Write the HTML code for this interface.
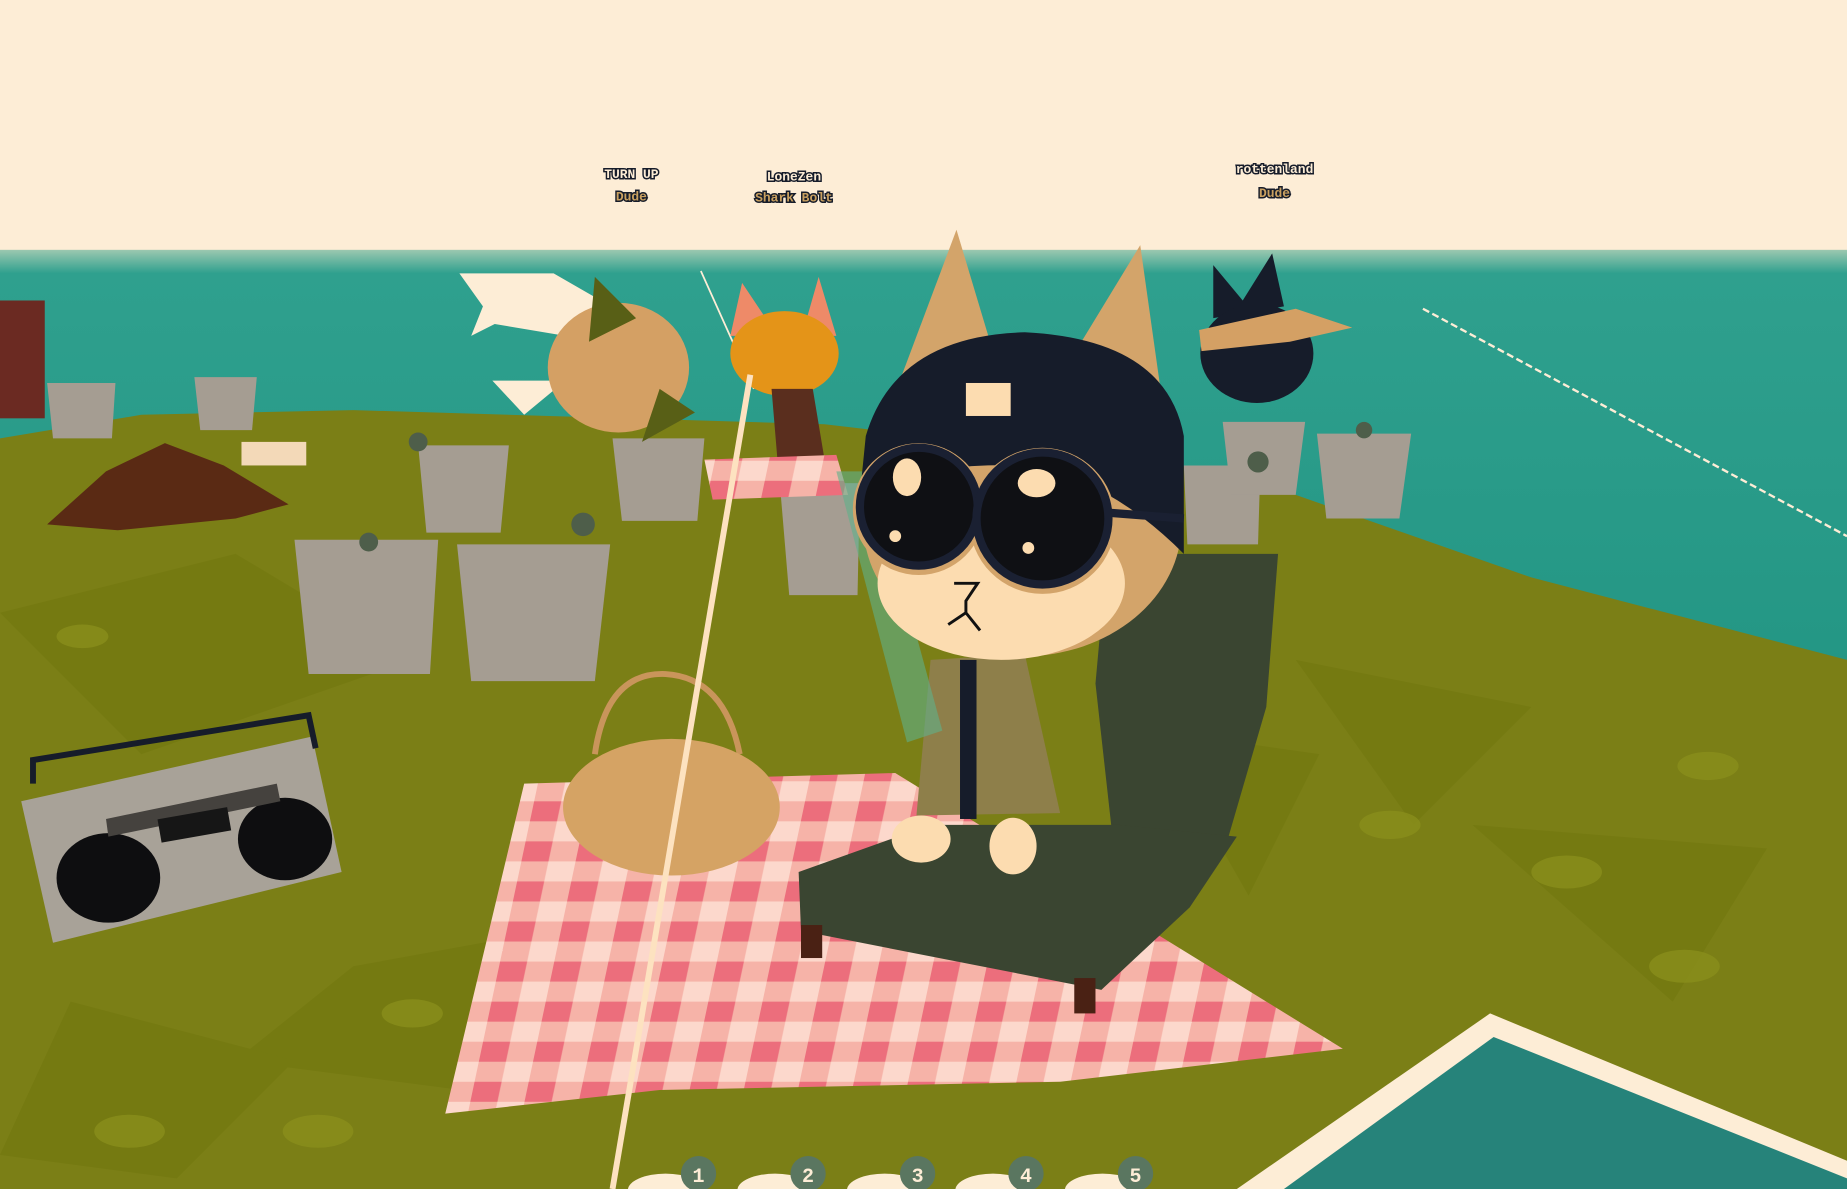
<!DOCTYPE html>
<html><head><meta charset="utf-8"><style>
html,body{margin:0;padding:0;background:#fdedd6;overflow:hidden}
svg{display:block}
text{font-family:"Liberation Mono",monospace;font-weight:bold}
</style></head><body>
<svg width="1847" height="1189" viewBox="0 0 1568 1009" preserveAspectRatio="none" xmlns="http://www.w3.org/2000/svg">
<defs>
<pattern id="chk" width="46" height="34" patternUnits="userSpaceOnUse" patternTransform="skewX(-12)">
<rect width="46" height="34" fill="#f6b3a8"/>
<rect width="23" height="17" fill="#ec6e7c"/>
<rect x="23" y="17" width="23" height="17" fill="#fcd8cc"/>
</pattern>
<linearGradient id="sea" x1="0" y1="0" x2="0" y2="1"><stop offset="0" stop-color="#9cc8b0"/><stop offset="0.05" stop-color="#2fa08e"/><stop offset="1" stop-color="#229583"/></linearGradient>
</defs>
<rect width="1568" height="1009" fill="#fdedd6"/>
<rect y="212" width="1568" height="400" fill="url(#sea)"/>
<polygon points="0,372 120,352 300,348 700,360 1000,395 1100,420 1300,490 1568,560 1568,1009 0,1009" fill="#7b7f16"/>
<g fill="#72770f" opacity="0.6">
<polygon points="0,520 200,470 350,560 120,640"/><polygon points="300,820 520,780 430,930 200,900"/>
<polygon points="1100,560 1300,600 1200,700"/><polygon points="1250,700 1500,720 1420,850"/>
<polygon points="60,850 250,900 150,1000 0,980"/><polygon points="980,620 1120,640 1060,760"/>
</g>
<g fill="#8a8f1c" opacity="0.8">
<ellipse cx="110" cy="960" rx="30" ry="14"/><ellipse cx="270" cy="960" rx="30" ry="14"/><ellipse cx="1430" cy="820" rx="30" ry="14"/><ellipse cx="1330" cy="740" rx="30" ry="14"/><ellipse cx="1180" cy="700" rx="26" ry="12"/><ellipse cx="1450" cy="650" rx="26" ry="12"/><ellipse cx="350" cy="860" rx="26" ry="12"/><ellipse cx="70" cy="540" rx="22" ry="10"/>
</g>
<polygon points="1050,1009 1265,860 1568,985 1568,1009" fill="#fdedd6"/>
<polygon points="1090,1009 1268,880 1568,1000 1568,1009" fill="#26837a"/>
<line x1="1208" y1="262" x2="1568" y2="455" stroke="#fdedd6" stroke-width="2" stroke-dasharray="6 3"/>
<line x1="595" y1="230" x2="640" y2="330" stroke="#fdedd6" stroke-width="1.5"/>
<polygon points="40,445 90,400 140,376 190,395 245,428 200,440 100,450" fill="#5a2a14"/>
<rect x="0" y="255" width="38" height="100" fill="#6b2a22"/>
<g fill="#a59d92">
<polygon points="40,325 98,325 95,372 45,372"/><polygon points="165,320 218,320 214,365 170,365"/>
<polygon points="355,378 432,378 425,452 362,452"/><polygon points="520,372 598,372 592,442 528,442"/>
<polygon points="250,458 372,458 365,572 262,572"/><polygon points="388,462 518,462 505,578 400,578"/>
<polygon points="662,410 730,410 728,505 670,505"/><polygon points="1005,395 1070,395 1068,462 1008,462"/>
<polygon points="1038,358 1108,358 1100,420 1045,420"/><polygon points="1118,368 1198,368 1188,440 1126,440"/>
</g>
<g fill="#4e5e4a"><circle cx="313" cy="460" r="8"/><circle cx="495" cy="445" r="10"/><circle cx="355" cy="375" r="8"/><circle cx="1068" cy="392" r="9"/><circle cx="1158" cy="365" r="7"/></g>
<rect x="205" y="375" width="55" height="20" fill="#f3d9b8"/>
<polygon points="390,232 470,232 510,255 480,285 420,275 400,285 410,260" fill="#fdedd6"/>
<polygon points="418,323 480,323 445,352" fill="#fdedd6"/>
<ellipse cx="525" cy="312" rx="60" ry="55" fill="#d4a064"/>
<polygon points="505,235 540,270 500,290" fill="#585f16"/><polygon points="560,330 590,350 545,375" fill="#585f16"/>
<polygon points="630,240 650,270 685,270 695,235 710,285 620,285" fill="#ee8a68"/>
<ellipse cx="666" cy="300" rx="46" ry="36" fill="#e49418"/>
<polygon points="655,330 690,330 700,390 660,390" fill="#5a2e1e"/>
<polygon points="1030,225 1055,255 1080,215 1090,260 1030,270" fill="#161c2a"/>
<ellipse cx="1067" cy="300" rx="48" ry="42" fill="#161c2a"/>
<polygon points="1018,280 1100,262 1148,278 1095,290 1020,298" fill="#d4a064"/>
<polygon points="598,390 710,386 720,420 605,424" fill="url(#chk)"/>
<polygon points="378,945 445,665 760,656 1140,890 900,918 560,925" fill="url(#chk)"/>
<path d="M505,640 Q515,570 565,572 Q615,575 628,640" fill="none" stroke="#c9955b" stroke-width="5"/>
<ellipse cx="570" cy="685" rx="92" ry="58" fill="#d5a364"/>
<polygon points="18,680 265,625 290,740 45,800" fill="#a8a298"/>
<path d="M28,665 L28,645 262,607 268,635" fill="none" stroke="#161c2a" stroke-width="5"/>
<ellipse cx="92" cy="745" rx="44" ry="38" fill="#0e0e10"/>
<ellipse cx="242" cy="712" rx="40" ry="35" fill="#0e0e10"/>
<polygon points="90,695 235,665 238,680 92,710" fill="#45423e"/>
<rect x="135" y="690" width="60" height="20" fill="#161616" transform="rotate(-10 165 700)"/>
<polygon points="940,470 1085,470 1075,600 1040,720 950,760 930,580" fill="#3a4531"/>
<polygon points="678,740 790,700 950,700 1050,710 1010,770 935,840 680,790" fill="#3a4531"/>
<rect x="680" y="785" width="18" height="28" fill="#4a2114"/><rect x="912" y="830" width="18" height="30" fill="#4a2114"/>
<polygon points="790,560 870,555 900,690 778,692" fill="#8e7f4a"/>
<rect x="815" y="560" width="14" height="135" fill="#161c2a"/>
<ellipse cx="782" cy="712" rx="25" ry="20" fill="#fcdcb0"/><ellipse cx="860" cy="718" rx="20" ry="24" fill="#fcdcb0"/>
<line x1="637" y1="318" x2="520" y2="1009" stroke="#fde2c0" stroke-width="5"/>
<polygon points="710,400 740,400 800,620 770,630" fill="#5fb08a" opacity="0.6"/>
<polygon points="765,320 812,195 845,305" fill="#d3a46a"/>
<polygon points="912,300 968,208 988,350" fill="#d3a46a"/>
<ellipse cx="868" cy="445" rx="135" ry="112" fill="#d3a46a"/>
<ellipse cx="850" cy="495" rx="105" ry="65" fill="#fcdcb0"/>
<path d="M735,370 Q760,285 870,282 Q990,288 1005,370 L1005,470 Q940,405 870,395 Q780,392 730,420 Z" fill="#161c2a"/>
<rect x="820" y="325" width="38" height="28" fill="#fcdcb0"/>
<circle cx="780" cy="432" r="56" fill="#d3a46a"/>
<circle cx="885" cy="442" r="62" fill="#d3a46a"/>
<circle cx="780" cy="430" r="50" fill="#0f1014" stroke="#1a2032" stroke-width="7"/>
<circle cx="885" cy="440" r="56" fill="#0f1014" stroke="#1a2032" stroke-width="7"/>
<ellipse cx="770" cy="405" rx="12" ry="16" fill="#fcdcb0"/><ellipse cx="880" cy="410" rx="16" ry="12" fill="#fcdcb0"/>
<circle cx="760" cy="455" r="5" fill="#fcdcb0"/><circle cx="873" cy="465" r="5" fill="#fcdcb0"/>
<line x1="940" y1="435" x2="1005" y2="440" stroke="#1a2032" stroke-width="7"/>
<path d="M810,495 L830,495 L820,510 L820,520 L805,530 M820,520 L832,535" fill="none" stroke="#111" stroke-width="2.5"/>
<g font-size="11" text-anchor="middle" stroke="#161c2a" stroke-width="2.5" paint-order="stroke">
<text x="536" y="151" fill="#fdedd6">TURN UP</text>
<text x="536" y="170" fill="#c9a060">Dude</text>
<text x="674" y="153" fill="#fdedd6">LoneZen</text>
<text x="674" y="171" fill="#c9a060">Shark Bolt</text>
<text x="1082" y="147" fill="#fdedd6">rottenland</text>
<text x="1082" y="167" fill="#c9a060">Dude</text>
</g>
<g fill="#fdedd6">
<ellipse cx="565" cy="1010" rx="32" ry="14"/><ellipse cx="658" cy="1010" rx="32" ry="14"/><ellipse cx="751" cy="1010" rx="32" ry="14"/><ellipse cx="843" cy="1010" rx="32" ry="14"/><ellipse cx="936" cy="1010" rx="32" ry="14"/>
</g>
<g fill="#5a7660"><circle cx="593" cy="996" r="15"/><circle cx="686" cy="996" r="15"/><circle cx="779" cy="996" r="15"/><circle cx="871" cy="996" r="15"/><circle cx="964" cy="996" r="15"/></g>
<g fill="#fdedd6" font-size="17" text-anchor="middle" style="font-family:'Liberation Sans',sans-serif">
<text x="593" y="1003">1</text><text x="686" y="1003">2</text><text x="779" y="1003">3</text><text x="871" y="1003">4</text><text x="964" y="1003">5</text>
</g>
</svg>
</body></html>
